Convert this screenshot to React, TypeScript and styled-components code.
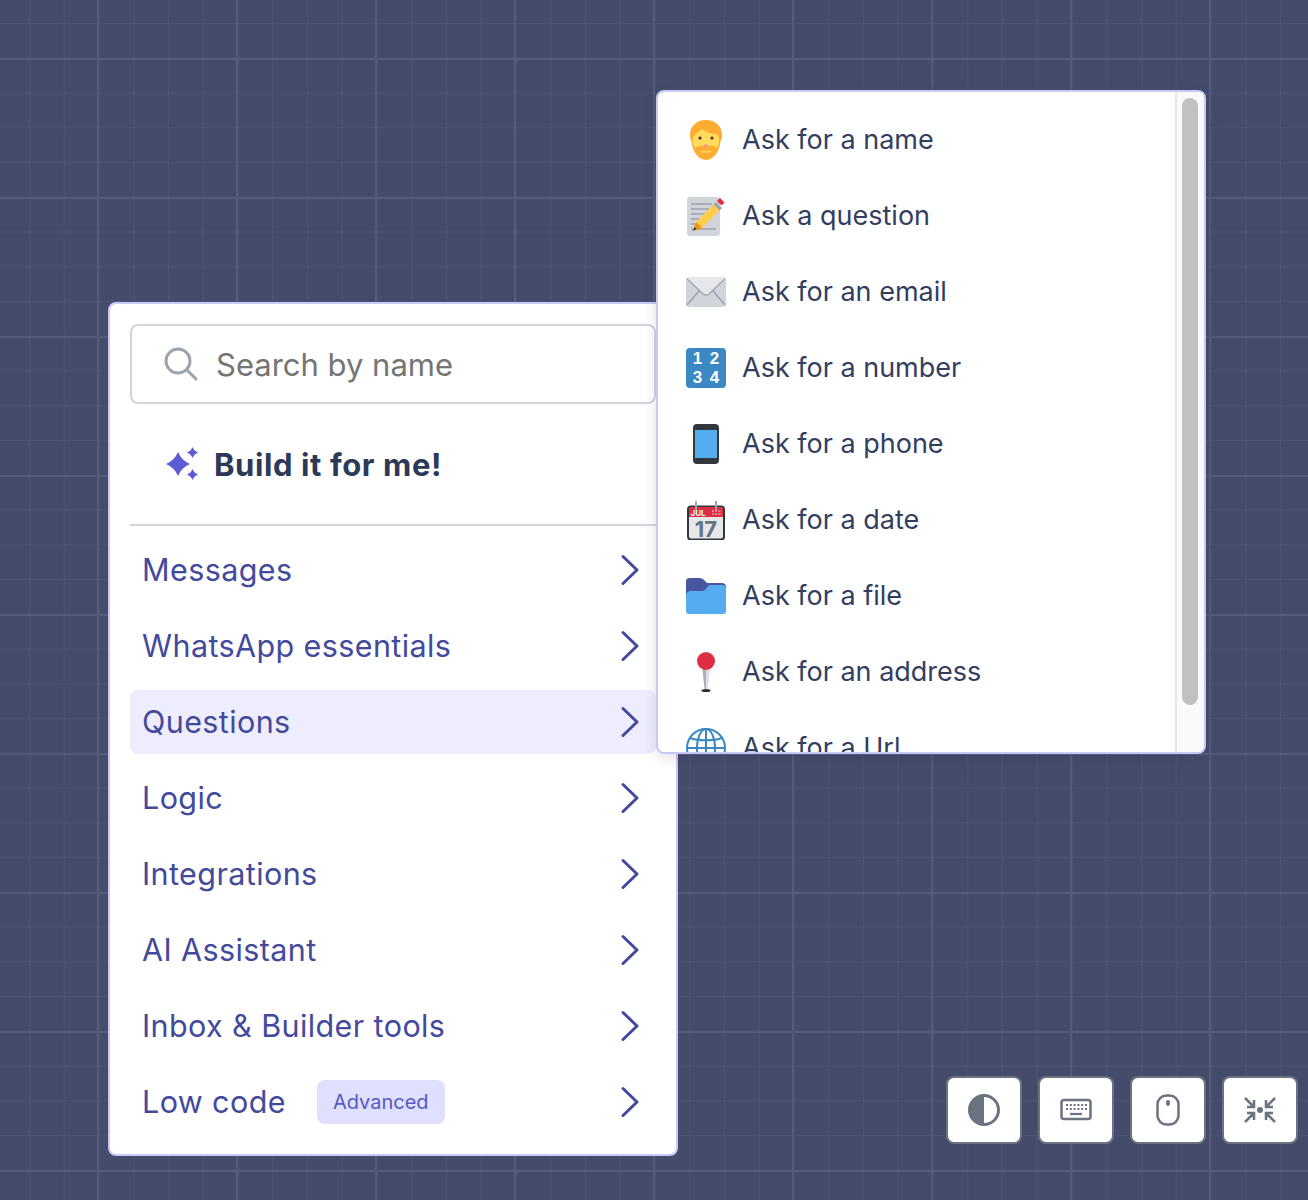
import React from 'react';
import styled, { createGlobalStyle } from 'styled-components';

const GlobalStyle = createGlobalStyle`
  html, body {
    margin: 0;
    padding: 0;
    background: #454c6b;
  }
  * {
    box-sizing: border-box;
  }
`;

const Canvas = styled.div`
  position: relative;
  width: 1308px;
  height: 1200px;
  overflow: hidden;
  font-family: Inter, 'Liberation Sans', sans-serif;
  background-color: #454c6b;
  background-image:
    linear-gradient(to right, #545b7c 2px, transparent 2px),
    linear-gradient(to bottom, #545b7c 2px, transparent 2px),
    linear-gradient(to right, #4c5373 1px, transparent 1px),
    linear-gradient(to bottom, #4c5373 1px, transparent 1px);
  background-size: 139px 139px, 139px 139px, 34.75px 34.75px, 34.75px 34.75px;
  background-position: 97px 0, 0 58px, 29px 0, 0 23px;
`;

const Panel = styled.div`
  position: absolute;
  background: #fff;
  border: 2px solid #c8c7f8;
  border-radius: 8px;
`;

const Menu = styled(Panel)`
  left: 108px;
  top: 302px;
  width: 570px;
  height: 854px;
  padding: 20px;
  display: flex;
  flex-direction: column;
`;

const SearchBox = styled.div`
  height: 80px;
  flex: none;
  display: flex;
  align-items: center;
  gap: 18px;
  padding-left: 32px;
  border: 2px solid #d1d5db;
  border-radius: 8px;
`;

const SearchText = styled.span`
  font-size: 31px;
  color: #757575;
`;

const BuildRow = styled.div`
  height: 122px;
  flex: none;
  display: flex;
  align-items: center;
  gap: 15px;
  padding-left: 35px;
  border-bottom: 2px solid #d1d5db;
`;

const BuildText = styled.span`
  font-size: 31px;
  font-weight: 700;
  letter-spacing: 0.6px;
  color: #2d3958;
`;

const Rows = styled.div`
  display: flex;
  flex-direction: column;
  gap: 12px;
  padding-top: 12px;
`;

const Row = styled.div<{ $active?: boolean }>`
  height: 64px;
  display: flex;
  align-items: center;
  padding: 0 16px 0 12px;
  border-radius: 8px;
  background: ${(p) => (p.$active ? '#eeedfd' : 'transparent')};
  color: #434a9c;
`;

const RowLabel = styled.span`
  margin-top: -2px;
  font-size: 30.5px;
  letter-spacing: 0.4px;
`;

const Badge = styled.span`
  margin-left: 31px;
  height: 44px;
  padding: 0 16px;
  display: flex;
  align-items: center;
  border-radius: 8px;
  background: #dfdffe;
  color: #5558c4;
  font-size: 20px;
`;

const Chevron = styled.svg`
  margin-left: auto;
  width: 20px;
  height: 32px;
  fill: none;
  stroke: currentColor;
  stroke-width: 3;
  stroke-linecap: round;
  stroke-linejoin: round;
`;

const SubMenu = styled(Panel)`
  left: 656px;
  top: 90px;
  width: 550px;
  height: 664px;
  overflow: hidden;
  display: flex;
  box-shadow: 0 4px 14px rgba(40, 44, 80, 0.14);
`;

const SubList = styled.div`
  flex: 1;
  min-width: 0;
  padding: 16px 28px 0;
  display: flex;
  flex-direction: column;
  gap: 12px;
`;

const SubRow = styled.div`
  height: 64px;
  flex: none;
  display: flex;
  align-items: center;
  gap: 16px;
`;

const EmojiSvg = styled.svg`
  width: 40px;
  height: 40px;
  flex: none;
`;

const NumberTile = styled.div`
  width: 40px;
  height: 40px;
  flex: none;
  padding: 0.5px 3px 0;
  display: grid;
  grid-template-columns: 1fr 1fr;
  grid-auto-rows: 19.5px;
  border-radius: 4px;
  background: #3b88c3;
  color: #fff;
  font-family: 'Liberation Sans', sans-serif;
  font-size: 17px;
  font-weight: 700;
  line-height: 19.5px;
  text-align: center;
`;

const SubLabel = styled.span`
  margin-top: -2px;
  font-size: 27px;
  color: #333e5f;
`;

const ScrollTrack = styled.div`
  width: 29px;
  flex: none;
  padding: 6px 6px 0 5px;
  background: #fafafa;
  border-left: 2px solid #e5e5ef;
`;

const ScrollThumb = styled.div`
  width: 16px;
  height: 607px;
  border-radius: 8px;
  background: #c1c1c1;
`;

const Toolbar = styled.div`
  position: absolute;
  left: 946px;
  top: 1076px;
  display: flex;
  gap: 16px;
`;

const ToolButton = styled.button`
  width: 76px;
  height: 68px;
  padding: 0;
  display: flex;
  align-items: center;
  justify-content: center;
  background: #fff;
  border: 2px solid #6b7280;
  border-radius: 8px;
  color: #6b7280;
`;

const ToolIcon = styled.svg`
  width: 32px;
  height: 32px;
`;

const EmojiText = styled.text`
  font-family: Inter, 'Liberation Sans', sans-serif;
  font-weight: 700;
`;

const NameIcon = () => (
  <EmojiSvg viewBox="0 0 40 40">
    <path fill="#FFAC33" d="M20 0c9 0 16 6 16 15 0 3-.8 5-1.600 7-.6 9-7 18-14.400 18S6.200 31 5.600 22C4.800 20 4 18 4 15 4 6 11 0 20 0z" />
    <path fill="#FFDC5D" d="M7 17c2-3 6-6 9-8 3 3 10 5 15 5 2 1 2 5 2 8 0 3-1 4-2 6-4-3-8-3-11-2-3-1-7-1-11 2-2-3-3-7-2-11z" />
    <circle cx="14" cy="18" r="1.600" fill="#662113" />
    <circle cx="26" cy="18" r="1.600" fill="#662113" />
    <ellipse cx="20" cy="25.500" rx="2.200" ry="1.200" fill="#F58F8F" />
    <path fill="#FFDC5D" d="M15 31h10v1.500H15z" />
  </EmojiSvg>
);

const MemoIcon = () => (
  <EmojiSvg viewBox="0 0 40 40">
    <rect x="1" y="1" width="33" height="39" rx="3" fill="#D1D5DB" />
    <path stroke="#99A1AD" strokeWidth="1.500" d="M5 8h21M5 13h18M5 18h14M5 23h10M5 28h9M5 33h25" />
    <path fill="#FFCC4D" d="M30 6l6 6-20 20-9 3 3-9z" />
    <path fill="#F4900C" d="M10 26l6 6-9 3z" />
    <path fill="#31373D" d="M8.500 31l2 2-3.500 2z" />
    <path fill="#99AAB5" d="M30 6l6 6-2.500 2.500-6-6z" />
    <path fill="#DD2E44" d="M34 2l4.500 4.500-3 3L31 5z" />
  </EmojiSvg>
);

const MailIcon = () => (
  <EmojiSvg viewBox="0 0 40 40">
    <rect x="0" y="5" width="40" height="30" rx="3" fill="#D1D5DB" />
    <path fill="#E5E7EB" d="M3 5h34c2 0 3 1 3 3L23 23c-2 1.500-4 1.500-6 0L0 8c0-2 1-3 3-3z" />
    <path fill="none" stroke="#9CA3AF" strokeWidth="1.500" d="M1 7l16 15c2 1.500 4 1.500 6 0L39 7M1 33l12-14M39 33L27 19" />
  </EmojiSvg>
);

const NumbersIcon = () => (
  <NumberTile>
    <span>1</span>
    <span>2</span>
    <span>3</span>
    <span>4</span>
  </NumberTile>
);

const PhoneIcon = () => (
  <EmojiSvg viewBox="0 0 40 40">
    <rect x="7" y="0" width="26" height="40" rx="4" fill="#31373D" />
    <rect x="9" y="6" width="22" height="28" fill="#55ACEE" />
  </EmojiSvg>
);

const CalendarIcon = () => (
  <EmojiSvg viewBox="0 0 40 40">
    <rect x="2" y="6.500" width="36" height="33" rx="3" fill="#E5E7EB" stroke="#31373D" strokeWidth="2" />
    <path fill="#DD2E44" d="M3 10c0-2 1-3 3-3h28c2 0 3 1 3 3v7H3z" />
    <path stroke="#99AAB5" strokeWidth="2" d="M10 1v9M30 1v9" />
    <EmojiText x="12" y="15.500" fontSize="8" fill="#fff" textAnchor="middle">JUL</EmojiText>
    <path stroke="#F7DCE0" strokeWidth="1.200" strokeDasharray="2 1.200" d="M26 11h10M26 14h10" />
    <EmojiText x="20" y="36.500" fontSize="22" fill="#66757F" textAnchor="middle">17</EmojiText>
  </EmojiSvg>
);

const FolderIcon = () => (
  <EmojiSvg viewBox="0 0 40 40">
    <path fill="#4A569F" d="M0 6c0-3 1-4 4-4h9c4 0 6 3 8 5h15c2 0 4 1 4 4v12H0z" />
    <path fill="#55ACEE" d="M0 35c0 2 1 3 3 3h34c2 0 3-1 3-3V13c0-3-1-4-4-4H24c-3 0-3 6-8 6H5c-3 0-5 2-5 5z" />
  </EmojiSvg>
);

const PinIcon = () => (
  <EmojiSvg viewBox="0 0 40 40">
    <path fill="#A9B0BA" d="M16 14h8l-2.500 23h-3z" />
    <path fill="#DEE1E5" d="M20 14h4l-2.500 23H20z" />
    <ellipse cx="20" cy="38.500" rx="4.500" ry="1.500" fill="#292F33" />
    <circle cx="20" cy="9" r="9" fill="#DD2E44" />
  </EmojiSvg>
);

const GlobeIcon = () => (
  <EmojiSvg viewBox="0 0 40 40" fill="none" stroke="#3B88C3" strokeWidth="2">
    <circle cx="20" cy="20" r="19" />
    <ellipse cx="20" cy="20" rx="9" ry="19" />
    <path d="M20 1v38M1 20h38M4 10c8 3 24 3 32 0M4 30c8-3 24-3 32 0" />
  </EmojiSvg>
);

const subItems = [
  { label: 'Ask for a name', Icon: NameIcon },
  { label: 'Ask a question', Icon: MemoIcon },
  { label: 'Ask for an email', Icon: MailIcon },
  { label: 'Ask for a number', Icon: NumbersIcon },
  { label: 'Ask for a phone', Icon: PhoneIcon },
  { label: 'Ask for a date', Icon: CalendarIcon },
  { label: 'Ask for a file', Icon: FolderIcon },
  { label: 'Ask for an address', Icon: PinIcon },
  { label: 'Ask for a Url', Icon: GlobeIcon },
];

const menuItems = [
  { label: 'Messages' },
  { label: 'WhatsApp essentials' },
  { label: 'Questions', active: true },
  { label: 'Logic' },
  { label: 'Integrations' },
  { label: 'AI Assistant' },
  { label: 'Inbox & Builder tools' },
  { label: 'Low code', badge: 'Advanced' },
];

export default function App() {
  return (
    <Canvas>
      <GlobalStyle />
      <Menu>
        <SearchBox>
          <svg width="34" height="34" viewBox="0 0 34 34" fill="none" stroke="#9ca3af" strokeWidth="3" strokeLinecap="round">
            <circle cx="14" cy="14" r="12" />
            <path d="M23 23l9 9" />
          </svg>
          <SearchText>Search by name</SearchText>
        </SearchBox>
        <BuildRow>
          <svg width="34" height="34" viewBox="0 0 34 34" fill="#5b5bd6">
            <path d="M13 5Q16.500 13.500 25 17 16.500 20.500 13 29 9.500 20.500 1 17 9.500 13.500 13 5z" />
            <path d="M27.500 0Q29 4 33 5.500 29 7 27.500 11 26 7 22 5.500 26 4 27.500 0z" />
            <path d="M27.500 22Q29 26 33 27.500 29 29 27.500 33 26 29 22 27.500 26 26 27.500 22z" />
          </svg>
          <BuildText>Build it for me!</BuildText>
        </BuildRow>
        <Rows>
          {menuItems.map((item) => (
            <Row key={item.label} $active={item.active}>
              <RowLabel>{item.label}</RowLabel>
              {item.badge && <Badge>{item.badge}</Badge>}
              <Chevron viewBox="0 0 20 32">
                <path d="M3 2.500l14 13.500L3 29.500" />
              </Chevron>
            </Row>
          ))}
        </Rows>
      </Menu>

      <SubMenu>
        <SubList>
          {subItems.map(({ label, Icon }) => (
            <SubRow key={label}>
              <Icon />
              <SubLabel>{label}</SubLabel>
            </SubRow>
          ))}
        </SubList>
        <ScrollTrack>
          <ScrollThumb />
        </ScrollTrack>
      </SubMenu>

      <Toolbar>
        <ToolButton>
          <ToolIcon viewBox="0 0 32 32" fill="none" stroke="currentColor" strokeWidth="3">
            <circle cx="16" cy="16" r="14.500" />
            <path fill="currentColor" stroke="none" d="M16 1a15 15 0 0 0 0 30z" />
          </ToolIcon>
        </ToolButton>
        <ToolButton>
          <ToolIcon viewBox="0 0 32 32" fill="none" stroke="currentColor" strokeWidth="2.500">
            <rect x="1.500" y="6" width="29" height="19" rx="2.500" />
            <path strokeWidth="2.200" strokeDasharray="2 1.800" d="M6 11h21M6 15h21" />
            <path strokeWidth="2.200" d="M10 20h12" />
          </ToolIcon>
        </ToolButton>
        <ToolButton>
          <ToolIcon viewBox="0 0 32 32" fill="none" stroke="currentColor" strokeWidth="2.500">
            <rect x="5.500" y="1.500" width="21" height="29" rx="9" />
            <ellipse cx="16" cy="9" rx="2" ry="3" fill="currentColor" stroke="none" />
          </ToolIcon>
        </ToolButton>
        <ToolButton>
          <ToolIcon viewBox="0 0 32 32" fill="none" stroke="currentColor" strokeWidth="2.500">
            <circle cx="16" cy="16" r="3" fill="currentColor" stroke="none" />
            <path d="M1 4l9 9M10 6v7H3M31 4l-9 9M22 6v7h7M1 28l9-9M10 26v-7H3M31 28l-9-9M22 26v-7h7" />
          </ToolIcon>
        </ToolButton>
      </Toolbar>
    </Canvas>
  );
}
